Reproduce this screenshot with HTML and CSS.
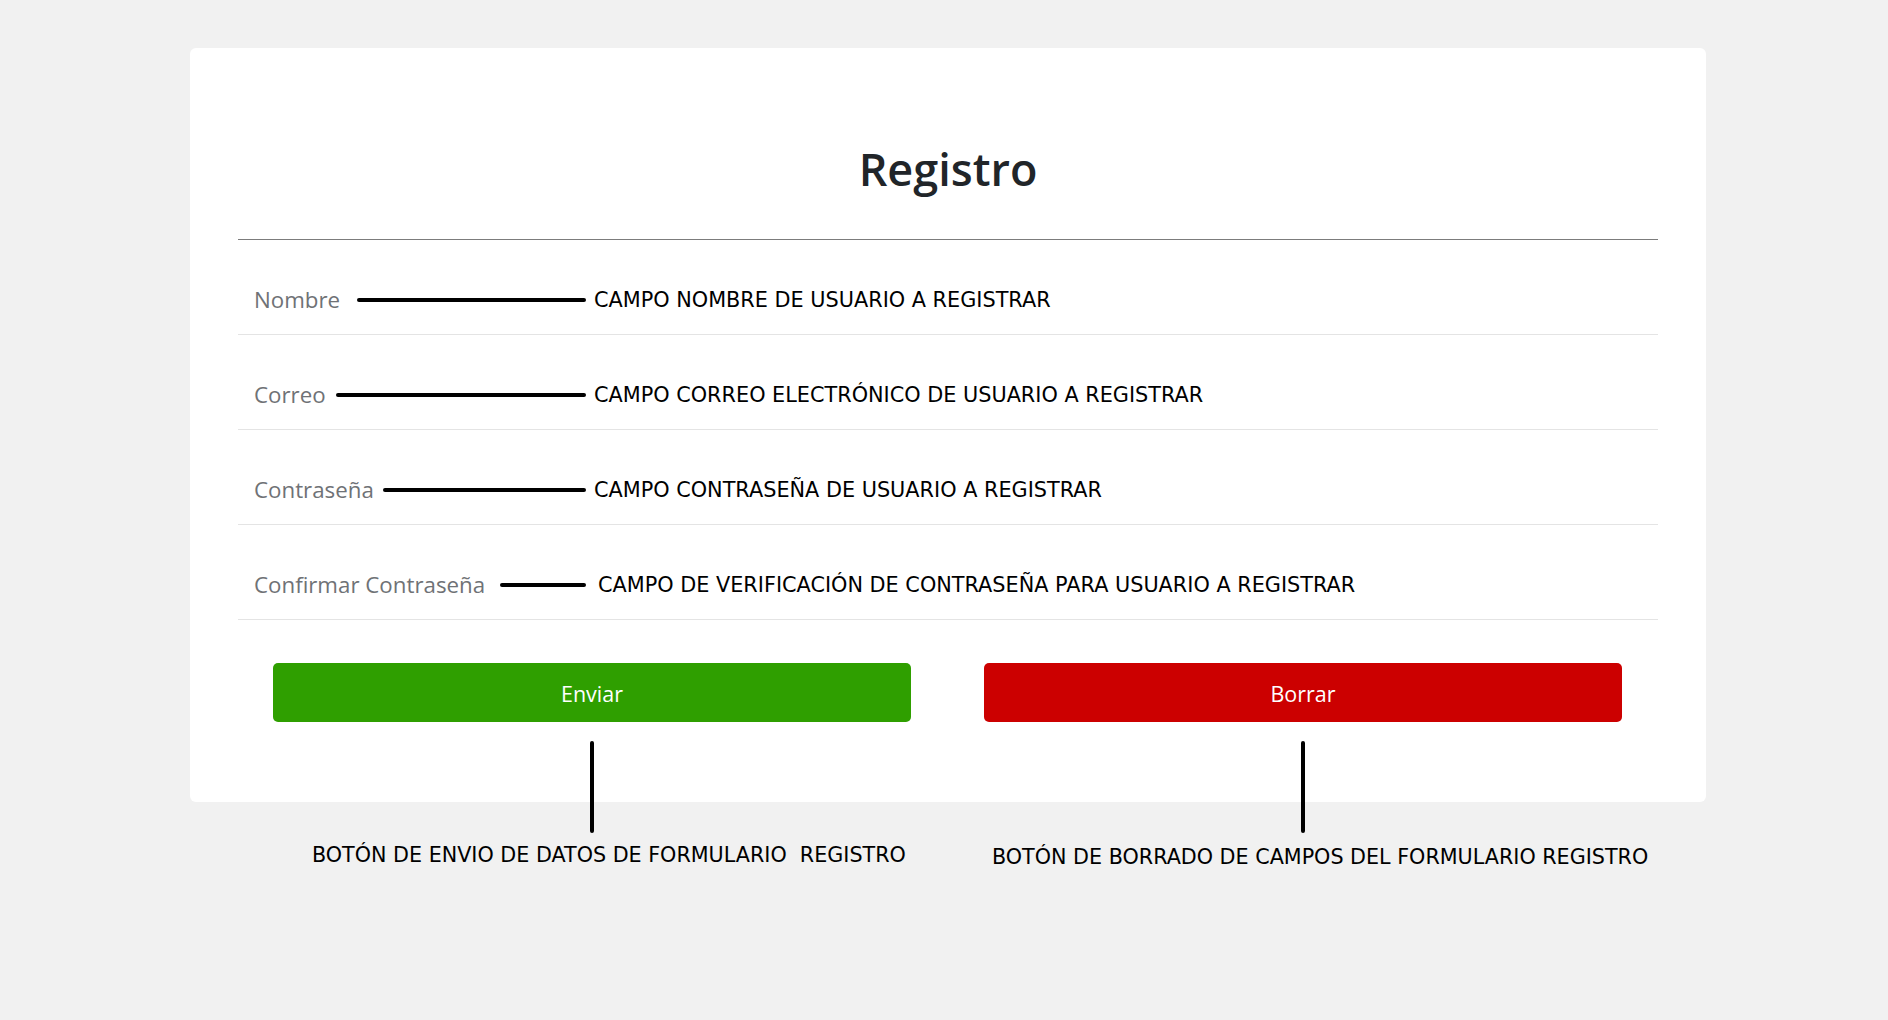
FILE: index.html
```html
<!DOCTYPE html>
<html lang="es">
<head>
<meta charset="utf-8">
<title>Registro</title>
<link rel="stylesheet" href="styles.css">
</head>
<body>
<main class="card">
  <h1 class="title">Registro</h1>
  <hr class="divider">
  <form class="form">
    <div class="field">
      <div class="pointer">
        <span class="label">Nombre</span>
        <span class="hline hline--nombre"></span>
      </div>
      <span class="note">CAMPO NOMBRE DE USUARIO A REGISTRAR</span>
    </div>
    <div class="field">
      <div class="pointer">
        <span class="label">Correo</span>
        <span class="hline hline--correo"></span>
      </div>
      <span class="note">CAMPO CORREO ELECTRÓNICO DE USUARIO A REGISTRAR</span>
    </div>
    <div class="field">
      <div class="pointer">
        <span class="label">Contraseña</span>
        <span class="hline hline--pass"></span>
      </div>
      <span class="note">CAMPO CONTRASEÑA DE USUARIO A REGISTRAR</span>
    </div>
    <div class="field">
      <div class="pointer">
        <span class="label">Confirmar Contraseña</span>
        <span class="hline hline--confirm"></span>
      </div>
      <span class="note note--confirm">CAMPO DE VERIFICACIÓN DE CONTRASEÑA PARA USUARIO A REGISTRAR</span>
    </div>
    <div class="actions">
      <div class="action">
        <button type="button" class="btn btn--send">Enviar</button>
        <div class="callout">
          <span class="vline"></span>
          <span class="callout-text callout-text--send">BOTÓN DE ENVIO DE DATOS DE FORMULARIO&nbsp; REGISTRO</span>
        </div>
      </div>
      <div class="action">
        <button type="button" class="btn btn--clear">Borrar</button>
        <div class="callout">
          <span class="vline"></span>
          <span class="callout-text callout-text--clear">BOTÓN DE BORRADO DE CAMPOS DEL FORMULARIO REGISTRO</span>
        </div>
      </div>
    </div>
  </form>
</main>
</body>
</html>
```
FILE: styles.css
```css
html, body {
  margin: 0;
  padding: 0;
}

body {
  background: #f1f1f1;
  font-family: "Open Sans", "Noto Sans", sans-serif;
  min-height: 1020px;
}

.card {
  box-sizing: border-box;
  width: 1516px;
  margin: 48px 0 0 190px;
  padding: 94px 48px 80px;
  background: #ffffff;
  border-radius: 6px;
}

.title {
  margin: 0;
  font-size: 45px;
  font-weight: 600;
  line-height: 54px;
  text-align: center;
  color: #212529;
}

.divider {
  margin: 43px 0 0;
  border: 0;
  border-top: 1px solid #7c7c7c;
  height: 0;
}

.form {
  margin: 0;
}

.field {
  box-sizing: border-box;
  height: 95px;
  padding-top: 44px;
  border-bottom: 1px solid #e4e4e4;
  display: flex;
  align-items: flex-start;
}

.pointer {
  width: 348px;
  height: 32px;
  display: flex;
  align-items: center;
  flex-shrink: 0;
}

.label {
  padding-left: 16px;
  font-size: 22.3px;
  line-height: 32px;
  color: #6f7276;
  white-space: nowrap;
}

.hline {
  margin-left: auto;
  height: 4px;
  border-radius: 2px;
  background: #000000;
}

.hline--nombre { width: 229px; }
.hline--correo { width: 250px; }
.hline--pass { width: 203px; }
.hline--confirm { width: 86px; }

.note {
  margin-left: 8px;
  font-family: "DejaVu Sans", "Liberation Sans", sans-serif;
  font-size: 20.8px;
  line-height: 32px;
  color: #000000;
  white-space: nowrap;
}

.note--confirm {
  margin-left: 12px;
}

.actions {
  display: grid;
  grid-template-columns: 1fr 1fr;
  column-gap: 73px;
  padding: 43px 36px 0 35px;
}

.action {
  position: relative;
}

.btn {
  display: block;
  width: 100%;
  height: 59px;
  padding: 2px 0 0;
  border: 0;
  border-radius: 5px;
  font-family: "Open Sans", "Noto Sans", sans-serif;
  font-size: 21.5px;
  color: #ffffff;
  cursor: pointer;
}

.btn--send { background: #2f9f00; }
.btn--clear { background: #cc0000; }

.callout {
  position: absolute;
  top: calc(100% + 19px);
  left: 0;
  right: 0;
  display: flex;
  flex-direction: column;
  align-items: flex-start;
}

.vline {
  align-self: center;
  width: 4px;
  height: 92px;
  border-radius: 2px;
  background: #000000;
}

.callout-text {
  margin-top: 10px;
  font-family: "DejaVu Sans", "Liberation Sans", sans-serif;
  font-size: 20.7px;
  line-height: 24px;
  color: #000000;
  white-space: nowrap;
}

.callout-text--send { margin-left: 39px; }
.callout-text--clear { margin-left: 8px; margin-top: 12px; }
```
